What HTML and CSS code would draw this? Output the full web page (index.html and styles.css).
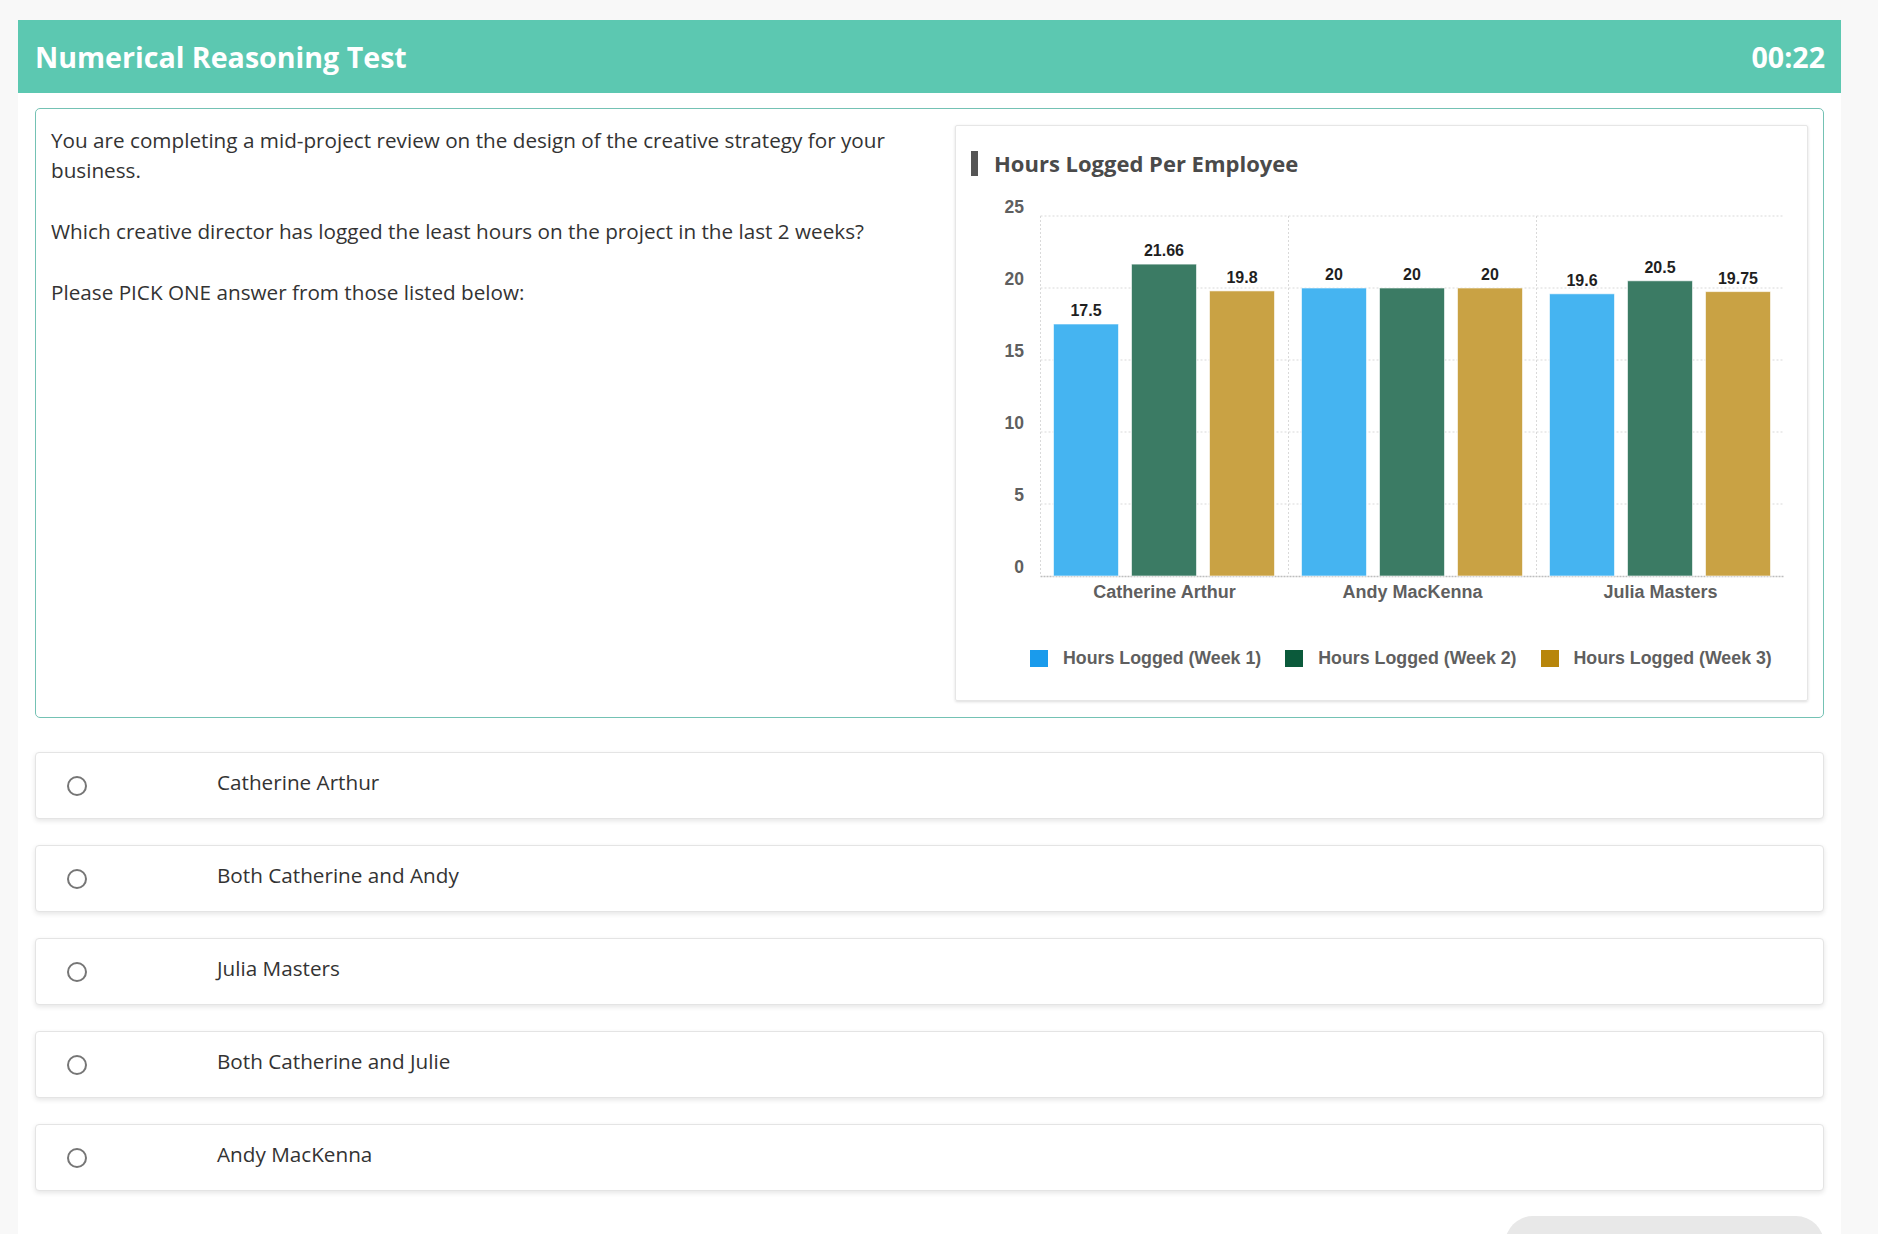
FILE: index.html
```html
<!DOCTYPE html>
<html lang="en">
<head>
<meta charset="utf-8">
<title>Numerical Reasoning Test</title>
<link rel="stylesheet" href="styles.css">
</head>
<body>
<div class="page">
  <header class="header">
    <h1 class="title">Numerical Reasoning Test</h1>
    <div class="timer">00:22</div>
  </header>
  <main class="content">
    <section class="question-box">
      <div class="question-text">
        <p>You are completing a mid-project review on the design of the creative strategy for your business.</p>
        <p>Which creative director has logged the least hours on the project in the last 2 weeks?</p>
        <p>Please PICK ONE answer from those listed below:</p>
      </div>
      <div class="chart-card">
        <h2 class="chart-title">Hours Logged Per Employee</h2>
        <svg class="chart" width="853" height="415" viewBox="0 0 853 415">
          <g class="grid">
            <line x1="85.5" y1="21" x2="828.5" y2="21"/>
            <line x1="85.5" y1="93" x2="828.5" y2="93"/>
            <line x1="85.5" y1="165" x2="828.5" y2="165"/>
            <line x1="85.5" y1="237" x2="828.5" y2="237"/>
            <line x1="85.5" y1="309" x2="828.5" y2="309"/>
            <line x1="85.5" y1="21" x2="85.5" y2="381"/>
            <line x1="333.5" y1="21" x2="333.5" y2="381"/>
            <line x1="581.5" y1="21" x2="581.5" y2="381"/>
          </g>
          <line class="axis" x1="85.5" y1="381.5" x2="828.5" y2="381.5"/>
          <g class="ylabels">
            <text x="69" y="18">25</text>
            <text x="69" y="90">20</text>
            <text x="69" y="162">15</text>
            <text x="69" y="234">10</text>
            <text x="69" y="306">5</text>
            <text x="69" y="378">0</text>
          </g>
          <g class="bars">
            <rect class="b1" x="98.5" y="129" width="65" height="252"/>
            <rect class="b2" x="176.5" y="69.1" width="65" height="311.9"/>
            <rect class="b3" x="254.5" y="95.9" width="65" height="285.1"/>
            <rect class="b1" x="346.5" y="93" width="65" height="288"/>
            <rect class="b2" x="424.5" y="93" width="65" height="288"/>
            <rect class="b3" x="502.5" y="93" width="65" height="288"/>
            <rect class="b1" x="594.5" y="98.8" width="65" height="282.2"/>
            <rect class="b2" x="672.5" y="85.8" width="65" height="295.2"/>
            <rect class="b3" x="750.5" y="96.6" width="65" height="284.4"/>
          </g>
          <g class="values">
            <text x="131" y="121">17.5</text>
            <text x="209" y="61">21.66</text>
            <text x="287" y="88">19.8</text>
            <text x="379" y="85">20</text>
            <text x="457" y="85">20</text>
            <text x="535" y="85">20</text>
            <text x="627" y="91">19.6</text>
            <text x="705" y="78">20.5</text>
            <text x="783" y="89">19.75</text>
          </g>
          <g class="xlabels">
            <text x="209.5" y="403">Catherine Arthur</text>
            <text x="457.5" y="403">Andy MacKenna</text>
            <text x="705.5" y="403">Julia Masters</text>
          </g>
        </svg>
        <div class="legend">
          <div class="legend-item"><span class="swatch s1"></span>Hours Logged (Week 1)</div>
          <div class="legend-item"><span class="swatch s2"></span>Hours Logged (Week 2)</div>
          <div class="legend-item"><span class="swatch s3"></span>Hours Logged (Week 3)</div>
        </div>
      </div>
    </section>

    <ul class="options">
      <li class="option"><span class="radio"></span><span class="option-label">Catherine Arthur</span></li>
      <li class="option"><span class="radio"></span><span class="option-label">Both Catherine and Andy</span></li>
      <li class="option"><span class="radio"></span><span class="option-label">Julia Masters</span></li>
      <li class="option"><span class="radio"></span><span class="option-label">Both Catherine and Julie</span></li>
      <li class="option"><span class="radio"></span><span class="option-label">Andy MacKenna</span></li>
    </ul>

    <div class="actions">
      <button class="next-btn" type="button"></button>
    </div>
  </main>
</div>
</body>
</html>
```

FILE: styles.css
```css
* { box-sizing: border-box; }

html, body {
  margin: 0;
  padding: 0;
  background: #f8f8f8;
  font-family: "Open Sans", "Liberation Sans", Arial, sans-serif;
  color: #333;
}

body { overflow: hidden; height: 1234px; }

.page {
  margin: 20px 0 0 18px;
  width: 1823px;
  min-height: 1300px;
  background: #fff;
}

.header {
  height: 73px;
  background: #5cc8b1;
  display: flex;
  align-items: center;
  justify-content: space-between;
  padding: 0 16px 0 17px;
  color: #fff;
}

.title {
  margin: 0;
  font-size: 28.6px;
  font-weight: 700;
  letter-spacing: 0;
}

.timer {
  font-size: 28.6px;
  font-weight: 700;
}

.content {
  padding: 15px 17px 0 17px;
}

.question-box {
  border: 1px solid #74c2b4;
  border-radius: 5px;
  padding: 16px 15px 16px 15px;
  display: grid;
  grid-template-columns: 1fr 853px;
  column-gap: 30px;
}

.question-text p {
  margin: 0 0 31px 0;
  font-size: 20.7px;
  line-height: 30px;
  color: #333;
}

.chart-card {
  height: 576px;
  border: 1px solid #e6e6e6;
  box-shadow: 0 1px 3px rgba(0, 0, 0, 0.14);
  border-radius: 2px;
  padding: 25px 0 0 0;
}

.chart-title {
  margin: 0 0 0 15px;
  border-left: 7px solid #555;
  padding-left: 16px;
  font-size: 22px;
  line-height: 25px;
  font-weight: 700;
  color: #4a4a4a;
}

.chart {
  display: block;
  margin: 19px 0 0 -1px;
}

.grid line {
  stroke: #d9d9d9;
  stroke-width: 1;
  stroke-dasharray: 2 2;
}

.axis {
  stroke: #bdbdbd;
  stroke-width: 1.5;
  stroke-dasharray: 2 1;
}

.chart text {
  font-family: "Liberation Sans", Arial, sans-serif;
  font-weight: 700;
}

.ylabels text {
  text-anchor: end;
  font-size: 17.5px;
  fill: #5f5f5f;
}

.xlabels text {
  text-anchor: middle;
  font-size: 18px;
  fill: #5f5f5f;
}

.values text {
  text-anchor: middle;
  font-size: 16px;
  fill: #1f1f1f;
}

.bars rect { stroke: rgba(255, 255, 255, 0.6); stroke-width: 1; }
.b1 { fill: #45b4f1; }
.b2 { fill: #3b7b64; }
.b3 { fill: #c9a244; }

.legend {
  display: flex;
  margin: 39px 0 0 74px;
  font-family: "Liberation Sans", Arial, sans-serif;
  font-weight: 700;
  font-size: 17.8px;
  line-height: 18px;
  color: #5f5f5f;
}

.legend-item {
  display: flex;
  align-items: center;
  margin-right: 24px;
}

.swatch {
  width: 18px;
  height: 17px;
  margin-right: 15px;
}

.s1 { background: #1a9bec; }
.s2 { background: #0b5a3b; }
.s3 { background: #b8860b; }

.options {
  list-style: none;
  margin: 34px 0 0 0;
  padding: 0;
}

.option {
  height: 67px;
  margin-bottom: 26px;
  border: 1px solid #e4e4e4;
  border-radius: 4px;
  background: #fff;
  box-shadow: 0 2px 5px rgba(0, 0, 0, 0.1);
  display: flex;
  align-items: center;
  padding-left: 31px;
}

.radio {
  width: 20px;
  height: 20px;
  border: 2px solid #767676;
  border-radius: 50%;
  flex: none;
  margin-top: 1px;
}

.option-label {
  margin-left: 130px;
  font-size: 20.7px;
  line-height: 28px;
  color: #333;
  margin-top: -7px;
}

.actions {
  display: flex;
  justify-content: flex-end;
  margin-top: -1px;
}

.next-btn {
  width: 319px;
  height: 56px;
  border: none;
  border-radius: 28px;
  background: #e8e8e8;
}
```
